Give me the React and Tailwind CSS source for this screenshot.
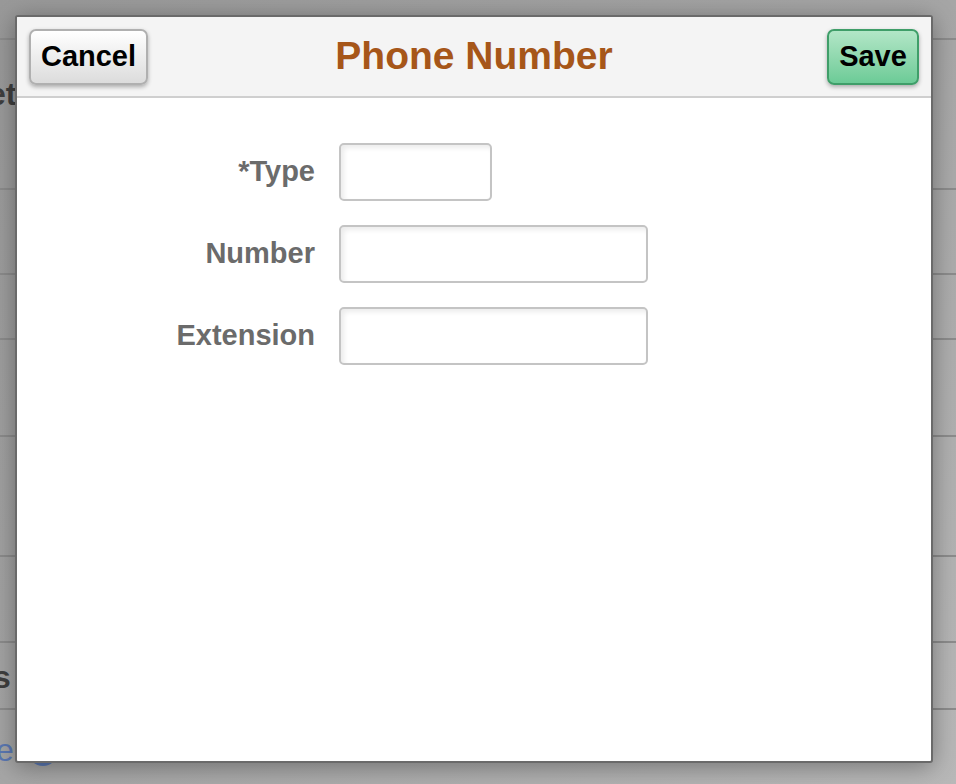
import React from "react";

const rows = [
  { h: "h-[40px]" },
  { h: "h-[150px]", text: "Get", cls: "pt-[38px] -ml-[37px]" },
  { h: "h-[85px]" },
  { h: "h-[65px]" },
  { h: "h-[97px]" },
  { h: "h-[120px]" },
  { h: "h-[86px]" },
  { h: "h-[67px]", text: "Topics", cls: "pt-[18px] -ml-[90px]" },
];

function Field({ label, width }) {
  return (
    <div className="flex items-center">
      <label className="w-[322px] pr-[24px] text-right text-[29px] font-bold text-[#6b6b6b]">
        {label}
      </label>
      <input
        type="text"
        className={`${width} h-[58px] rounded-[5px] border-2 border-[#c4c4c4] bg-white shadow-[inset_3px_3px_5px_rgba(0,0,0,0.08)] outline-none`}
      />
    </div>
  );
}

export default function App() {
  return (
    <div
      className="relative w-[956px] h-[784px] overflow-hidden bg-gradient-to-br from-[#999999] via-[#a6a6a6] to-[#b8b8b8]"
      style={{ fontFamily: '"Liberation Sans", Arial, sans-serif' }}
    >
      {/* page behind the dialog */}
      <div className="flex flex-col">
        {rows.map((r, i) => (
          <div key={i} className={`${r.h} border-b-2 border-[#8c8c8c] flex`}>
            {r.text && (
              <span className={`${r.cls} text-[32px] font-bold leading-none text-[#3f3f3f]`}>
                {r.text}
              </span>
            )}
          </div>
        ))}
        <div className="flex items-start pt-[24px] -ml-[4px]">
          <span className="text-[32px] text-[#5b78b3] leading-none">e</span>
          <span className="ml-[14px] mt-[2px] w-[30px] h-[30px] rounded-full border-[3px] border-[#5b78b3]" />
        </div>
      </div>

      {/* dialog */}
      <div className="absolute left-[15px] top-[15px] w-[918px] h-[748px] rounded-[3px] border-2 border-[#6a6a6a] bg-white shadow-[0_4px_24px_rgba(0,0,0,0.35)] flex flex-col overflow-hidden">
        <div className="h-[81px] shrink-0 bg-[#f4f4f4] border-b-2 border-[#cfcfcf] grid grid-cols-[1fr_auto_1fr] items-center px-[12px]">
          <div className="flex">
            <button className="w-[119px] h-[56px] rounded-[7px] border-2 border-[#b0b0b0] bg-gradient-to-b from-[#ffffff] to-[#dcdcdc] shadow-[0_2px_4px_rgba(0,0,0,0.3)] text-[29px] font-bold text-black">
              Cancel
            </button>
          </div>
          <h1 className="text-[39px] font-bold text-[#a65619]">Phone Number</h1>
          <div className="flex justify-end">
            <button className="w-[92px] h-[56px] rounded-[7px] border-2 border-[#3f9e69] bg-gradient-to-b from-[#b2e6c7] to-[#6ccb97] shadow-[0_2px_4px_rgba(0,0,0,0.3)] text-[29px] font-bold text-black">
              Save
            </button>
          </div>
        </div>
        <div className="flex flex-col gap-[24px] pt-[45px]">
          <Field label="*Type" width="w-[153px]" />
          <Field label="Number" width="w-[309px]" />
          <Field label="Extension" width="w-[309px]" />
        </div>
      </div>
    </div>
  );
}
